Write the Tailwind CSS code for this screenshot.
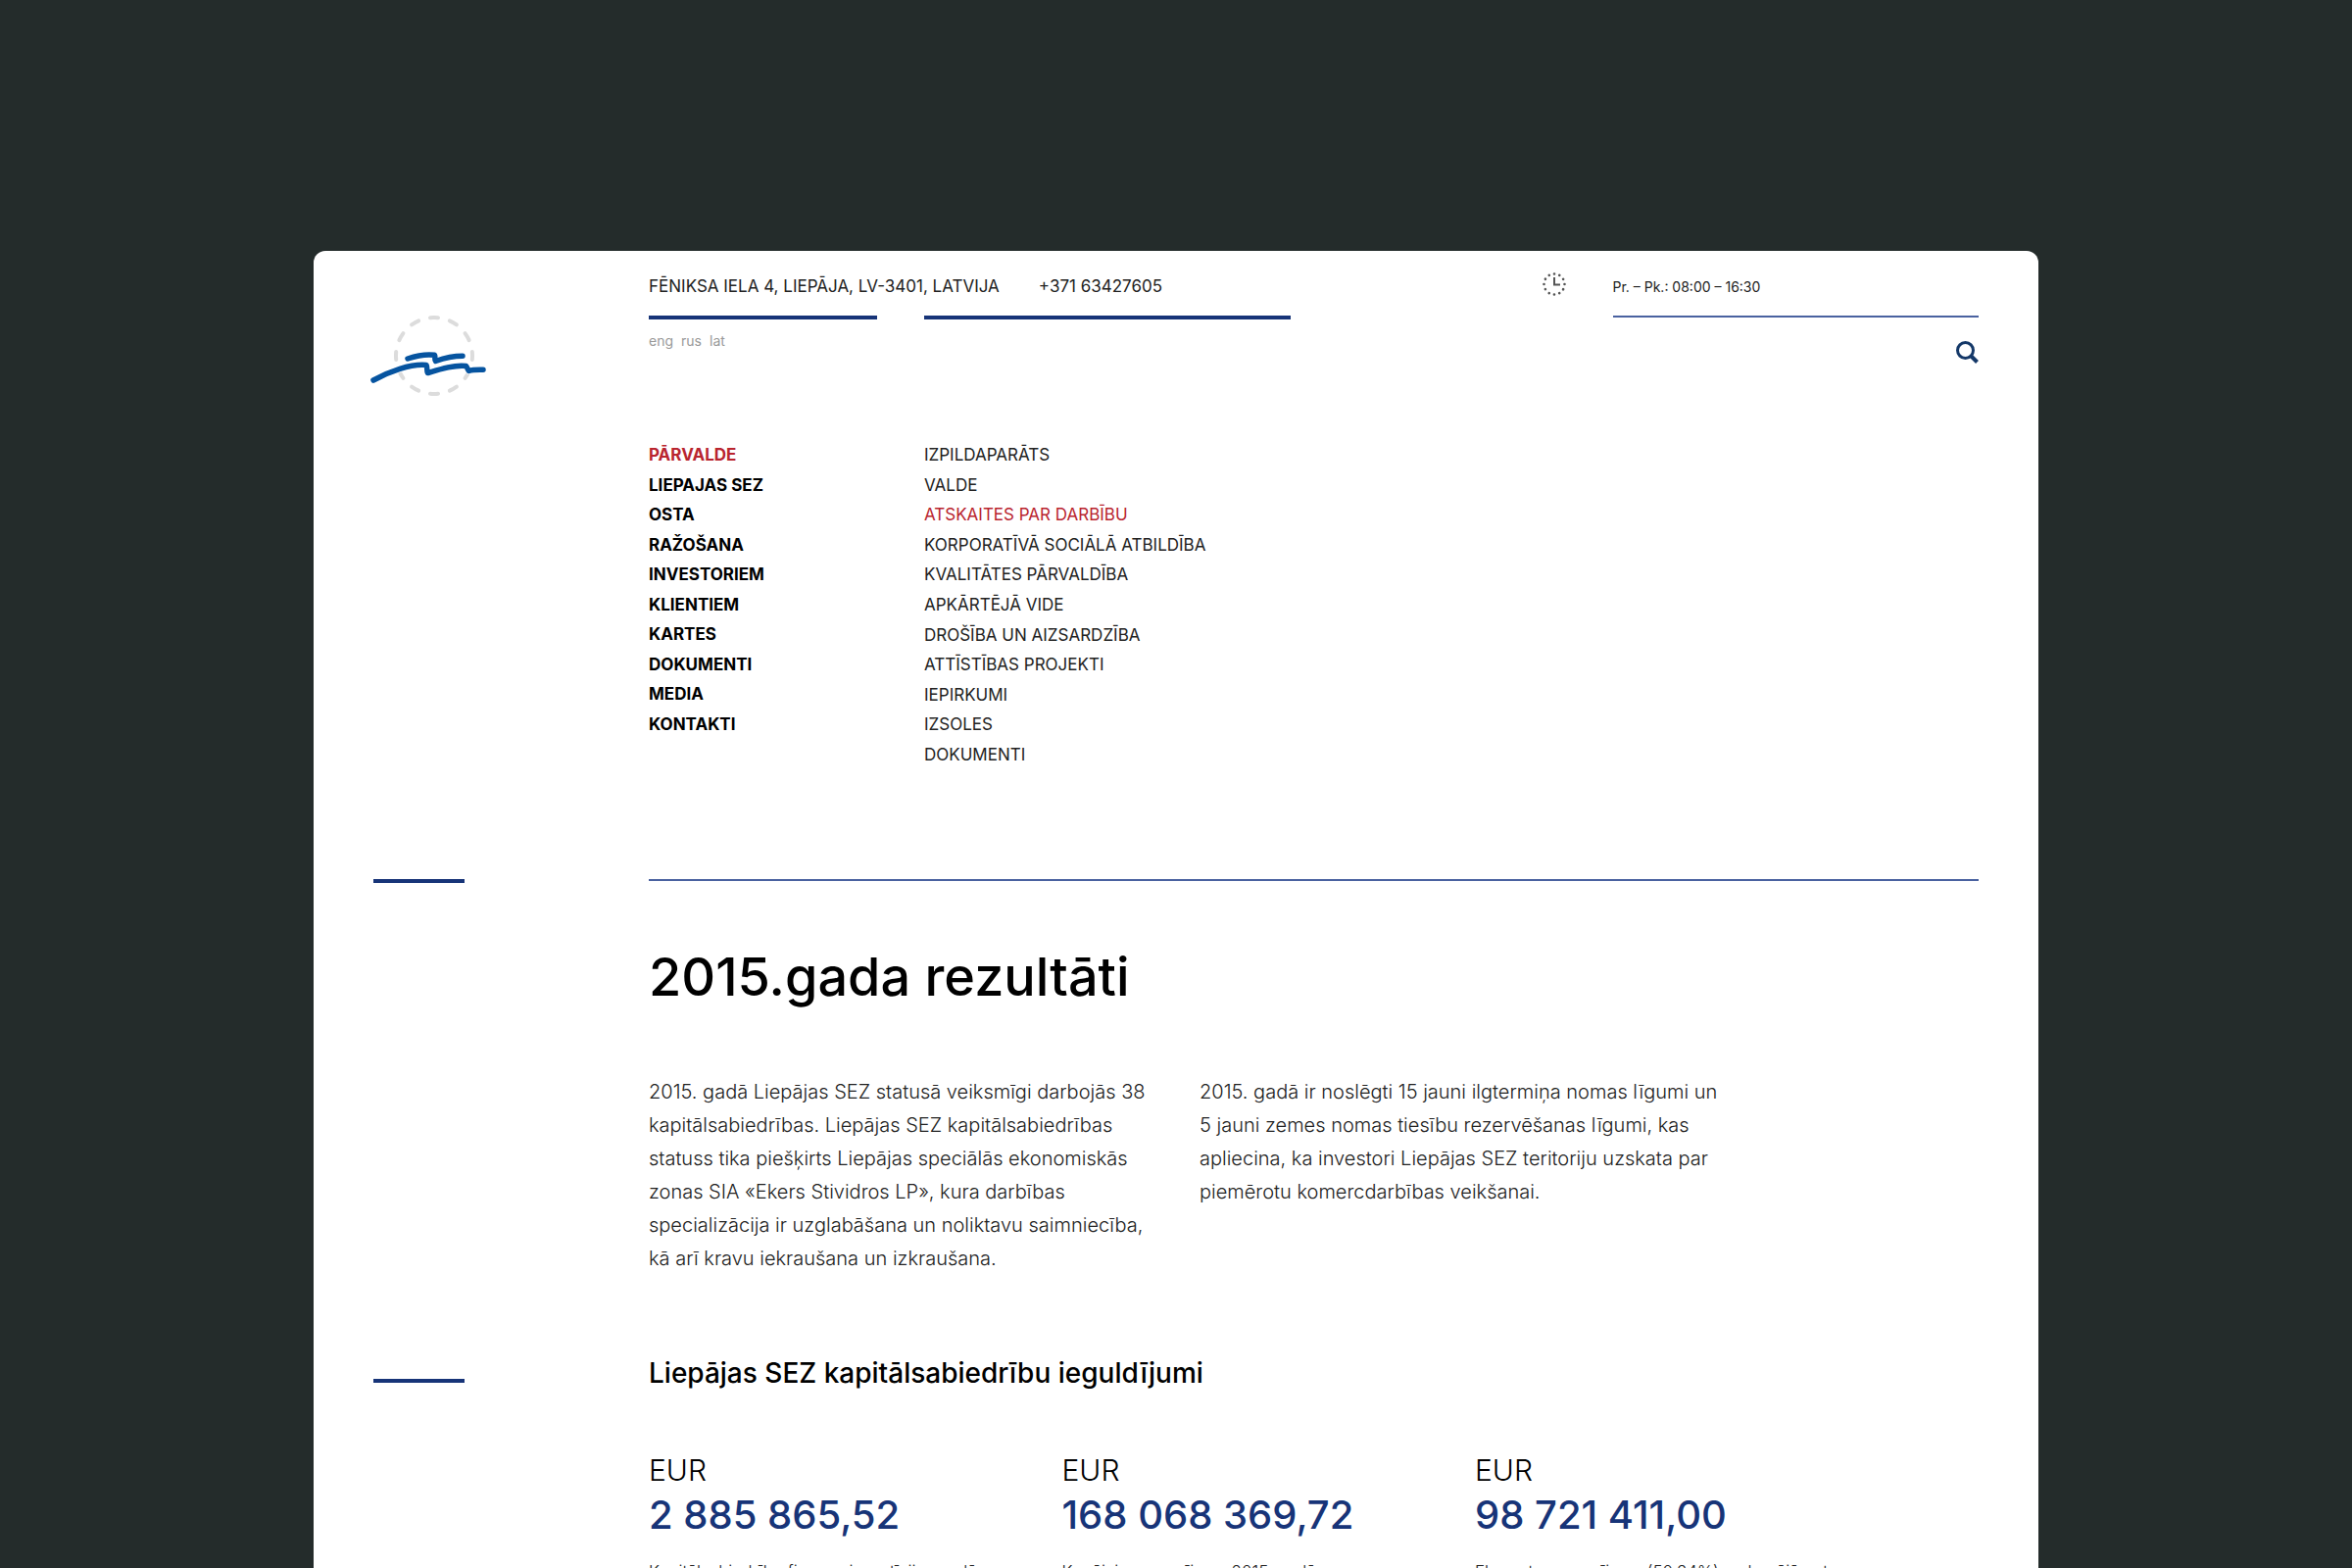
<!DOCTYPE html>
<html lang="lv">

<head>
  <meta charset="UTF-8" />
  <meta name="viewport" content="width=device-width, initial-scale=1.0" />
  <title>Liepājas SEZ - 2015.gada rezultāti</title>
  <script src="https://cdn.jsdelivr.net/npm/@tailwindcss/browser@4"></script>
</head>

<body class="h-screen overflow-hidden bg-[#242c2b] font-[Inter,sans-serif] text-black">

  <div class="mx-80 mt-64 min-h-screen rounded-t-xl bg-white px-[61px] pt-6">

    <!-- Header -->
    <header class="grid grid-cols-12 gap-x-12">
      <a href="#" class="col-span-2 mt-10 -ml-1" aria-label="Liepājas SEZ">
        <svg class="h-[86px] w-[122px]" viewBox="0 0 122 86" fill="none" stroke-linecap="round" stroke-linejoin="round">
          <circle cx="66" cy="43" r="39" stroke="#dcdcdc" stroke-width="4" pathLength="240" stroke-dasharray="8 12" stroke-dashoffset="4" />
          <path d="M4 68C20 59 42 51 58 52.500C59.500 55 58 58 59.500 60.500C71 57 86 52 98.500 53.500C100 55 100 57 101.500 58.500C106 57 111 57.300 116 57.300" stroke="#fff" stroke-width="7" />
          <path d="M39 46C48 43 57 41 66.500 42.300C67.500 44 66 47 67.500 48.500C76 45.500 85 43.300 95 43.300" stroke="#0654a0" stroke-width="5.500" />
          <path d="M4 68C20 59 42 51 58 52.500C59.500 55 58 58 59.500 60.500C71 57 86 52 98.500 53.500C100 55 100 57 101.500 58.500C106 57 111 57.300 116 57.300" stroke="#0654a0" stroke-width="5.500" />
        </svg>
      </a>

      <div class="col-span-10">
        <div class="grid grid-cols-10 items-baseline gap-x-12 leading-6">
          <div class="col-span-5 flex gap-10 text-[17px] whitespace-nowrap text-[#222]">
            <address class="not-italic">FĒNIKSA IELA 4, LIEPĀJA, LV-3401, LATVIJA</address>
            <a href="tel:+37163427605">+371 63427605</a>
          </div>
          <div class="col-start-7 self-start justify-self-end">
            <svg class="-mt-[2px] size-6" viewBox="0 0 24 24" fill="none" stroke="#555">
              <circle cx="12" cy="12" r="10.500" stroke-width="2.600" stroke-linecap="round" pathLength="120" stroke-dasharray="0.100 9.900" />
              <path d="M12 5v7.500h6" stroke-width="2" />
            </svg>
          </div>
          <p class="col-span-3 text-[14px] whitespace-nowrap text-[#222]">Pr. – Pk.: 08:00 – 16:30</p>
        </div>

        <div class="mt-[17px] grid h-1 grid-cols-10 gap-x-12">
          <div class="col-span-2 bg-[#173478]"></div>
          <div class="col-span-3 bg-[#173478]"></div>
          <div class="col-span-3 col-start-8 h-[2px] bg-[#4a62a0]"></div>
        </div>

        <div class="flex items-start justify-between">
          <div class="mt-3 flex gap-2 text-[14px] leading-5 text-[#999]">
            <a href="#">eng</a>
            <a href="#">rus</a>
            <a href="#">lat</a>
          </div>
          <button type="button" class="mt-[22px] block" aria-label="Meklēt">
            <svg class="h-[23px] w-[23px]" viewBox="0 0 23 23" fill="none" stroke="#143868">
              <circle cx="9.500" cy="9.500" r="8" stroke-width="3" />
              <path d="M15 15l6.500 6.500" stroke-width="4" />
            </svg>
          </button>
        </div>

        <!-- Menu -->
        <nav class="mt-[81px] grid h-[330px] grid-cols-10 items-start gap-x-12 text-[17px] leading-6 whitespace-nowrap">
          <ul class="col-span-2 flex h-[299px] flex-col justify-between font-bold">
            <li><a href="#" class="text-[#b9252f]">PĀRVALDE</a></li>
            <li><a href="#">LIEPAJAS SEZ</a></li>
            <li><a href="#">OSTA</a></li>
            <li><a href="#">RAŽOŠANA</a></li>
            <li><a href="#">INVESTORIEM</a></li>
            <li><a href="#">KLIENTIEM</a></li>
            <li><a href="#">KARTES</a></li>
            <li><a href="#">DOKUMENTI</a></li>
            <li><a href="#">MEDIA</a></li>
            <li><a href="#">KONTAKTI</a></li>
          </ul>
          <ul class="col-span-3 flex h-[330px] flex-col justify-between text-[#222]">
            <li><a href="#">IZPILDAPARĀTS</a></li>
            <li><a href="#">VALDE</a></li>
            <li><a href="#" class="text-[#b9252f]">ATSKAITES PAR DARBĪBU</a></li>
            <li><a href="#">KORPORATĪVĀ SOCIĀLĀ ATBILDĪBA</a></li>
            <li><a href="#">KVALITĀTES PĀRVALDĪBA</a></li>
            <li><a href="#">APKĀRTĒJĀ VIDE</a></li>
            <li><a href="#">DROŠĪBA UN AIZSARDZĪBA</a></li>
            <li><a href="#">ATTĪSTĪBAS PROJEKTI</a></li>
            <li><a href="#">IEPIRKUMI</a></li>
            <li><a href="#">IZSOLES</a></li>
            <li><a href="#">DOKUMENTI</a></li>
          </ul>
        </nav>
      </div>
    </header>

    <main>
      <!-- Results -->
      <section class="mt-[115px] grid grid-cols-12 gap-x-12">
        <div class="h-1 bg-[#173478]"></div>
        <div class="col-span-10 col-start-3">
          <div class="h-[2px] bg-[#4a62a0]"></div>
          <h1 class="mt-[66px] text-[54px] leading-[64px] font-medium">2015.gada rezultāti</h1>
          <div class="mt-[68px] grid grid-cols-10 gap-x-12 text-[20px] leading-[34px] font-light whitespace-nowrap text-[#222]">
            <p class="col-span-4">
              2015. gadā Liepājas SEZ statusā veiksmīgi darbojās 38<br>
              kapitālsabiedrības. Liepājas SEZ kapitālsabiedrības<br>
              statuss tika piešķirts Liepājas speciālās ekonomiskās<br>
              zonas SIA «Ekers Stividros LP», kura darbības<br>
              specializācija ir uzglabāšana un noliktavu saimniecība,<br>
              kā arī kravu iekraušana un izkraušana.
            </p>
            <p class="col-span-4">
              2015. gadā ir noslēgti 15 jauni ilgtermiņa nomas līgumi un<br>
              5 jauni zemes nomas tiesību rezervēšanas līgumi, kas<br>
              apliecina, ka investori Liepājas SEZ teritoriju uzskata par<br>
              piemērotu komercdarbības veikšanai.
            </p>
          </div>
        </div>
      </section>

      <!-- Investments -->
      <section class="mt-20 grid grid-cols-12 gap-x-12">
        <div class="mt-[26px] h-1 bg-[#173478]"></div>
        <div class="col-span-10 col-start-3">
          <h2 class="text-[28px] leading-10 font-medium">Liepājas SEZ kapitālsabiedrību ieguldījumi</h2>
          <div class="mt-[61px] grid grid-cols-10 gap-x-12 whitespace-nowrap">
            <div class="col-span-3">
              <p class="text-[30px] leading-9 font-light">EUR</p>
              <p class="mt-1 text-[40px] leading-[48px] font-medium text-[#173478]">2 885 865,52</p>
              <p class="mt-5 text-[17px] leading-7 font-light text-[#222]">Kapitālsabiedrību finansu investīcijas gadā</p>
            </div>
            <div class="col-span-3">
              <p class="text-[30px] leading-9 font-light">EUR</p>
              <p class="mt-1 text-[40px] leading-[48px] font-medium text-[#173478]">168 068 369,72</p>
              <p class="mt-5 text-[17px] leading-7 font-light text-[#222]">Kopējais apgrozījums 2015. gadā</p>
            </div>
            <div class="col-span-3">
              <p class="text-[30px] leading-9 font-light">EUR</p>
              <p class="mt-1 text-[40px] leading-[48px] font-medium text-[#173478]">98 721 411,00</p>
              <p class="mt-5 text-[17px] leading-7 font-light text-[#222]">Eksporta apgrozījums (50,34%) no kopējā neto</p>
            </div>
          </div>
        </div>
      </section>
    </main>

  </div>

</body>

</html>
